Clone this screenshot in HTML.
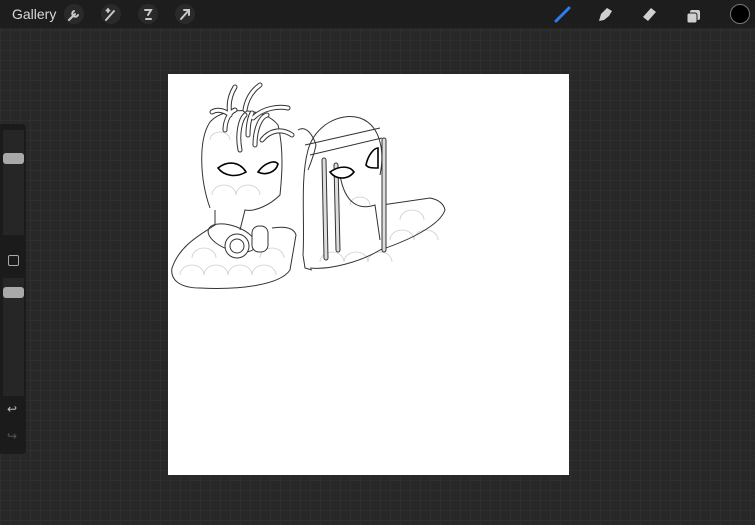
<!DOCTYPE html>
<html><head><style>
html,body{margin:0;padding:0}
body{width:755px;height:525px;overflow:hidden;position:relative;font-family:"Liberation Sans",sans-serif;
background-color:#282828;
background-image:linear-gradient(#2f2f2f 1px,transparent 1px),linear-gradient(90deg,#2f2f2f 1px,transparent 1px);
background-size:10px 10px;}
.top{position:absolute;left:0;top:0;width:755px;height:28px;background:#1d1d1d}
.gal{position:absolute;left:12px;top:6px;color:#d8d8d8;font-size:14px}
.ib{position:absolute;top:4px;width:20px;height:20px;border-radius:10px;background:#2a2a2a}
.side{position:absolute;left:0;top:124px;width:26px;height:330px;background:#1b1b1b;border-radius:0 4px 4px 0}
.trk{position:absolute;left:3px;width:21px;background:#262626}
.kn{position:absolute;left:3px;width:21px;height:11px;background:#a9a9a9;border-radius:3px}
.canvas{position:absolute;left:168px;top:74px;width:401px;height:401px;background:#fff}
</style></head><body>
<div class="top">
<div class="gal">Gallery</div>
<div class="ib" style="left:64px"></div><div class="ib" style="left:101px"></div><div class="ib" style="left:138px"></div><div class="ib" style="left:175px"></div>
<svg width="755" height="28" style="position:absolute;left:0;top:0">
<g stroke="#c8c8c8" stroke-width="2" fill="none" stroke-linecap="round">
<path d="M69 20 L75 14 M74 11 a3 3 0 1 0 4 4"/>
<path d="M106 20 L114 11 M108 9 v3 M106.5 10.5 h3"/>
<path d="M145 10 h6 l-3 5 M146 19 h5"/>
<path d="M181 19 L189 10 M184 10 h5 v5"/>
</g>
<path d="M556 21 L569 8" stroke="#2f7cf0" stroke-width="3" stroke-linecap="round"/>
<path d="M599 21 l2-7 6-6 5 3-3 5-5 4z" fill="#cfcfcf"/>
<path d="M643 17 l8-9 5 4-8 9z" fill="#d0d0d0"/>
<rect x="690" y="10" width="10" height="10" rx="2" fill="#cfcfcf"/><rect x="687" y="13" width="10" height="10" rx="2" fill="#cfcfcf" stroke="#1d1d1d"/>
<circle cx="740" cy="14" r="9.5" fill="#000" stroke="#777" stroke-width="1"/>
</svg>
</div>
<div class="side">
<div class="trk" style="top:6px;height:105px"></div>
<div class="kn" style="top:29px"></div>
<div style="position:absolute;left:8px;top:131px;width:9px;height:9px;border:1.5px solid #aaa;border-radius:2px"></div>
<div class="trk" style="top:154px;height:118px"></div>
<div class="kn" style="top:163px"></div>
<div style="position:absolute;left:7px;top:278px;color:#bbb;font-size:12px">↩</div>
<div style="position:absolute;left:7px;top:305px;color:#555;font-size:12px">↪</div>
</div>
<div class="canvas"></div>
<svg width="755" height="525" style="position:absolute;left:0;top:0">
<g fill="none" stroke="#ccc" stroke-width="0.8">
<path d="M180 275 a12 10 0 0 1 24 0 a12 10 0 0 1 24 0 a12 10 0 0 1 24 0 a12 10 0 0 1 24 0 M192 258 a12 10 0 0 1 24 0 M260 258 a12 10 0 0 1 24 0"/>
<path d="M320 262 a12 10 0 0 1 24 0 a12 10 0 0 1 24 0 a12 10 0 0 1 24 0 M390 240 a12 10 0 0 1 24 0 a12 10 0 0 1 24 0 M400 220 a12 10 0 0 1 24 0"/>
<path d="M210 140 a10 8 0 0 1 20 0 M212 195 a12 10 0 0 1 24 0 a12 10 0 0 1 24 0 M350 205 a10 8 0 0 1 20 0"/>
</g>
<g fill="none" stroke="#333" stroke-width="1">
<path d="M210 208 C200 180 198 140 210 122 C225 105 265 108 278 125 C284 150 282 175 280 195 C270 205 255 212 245 210 L240 230 M215 210 L215 225 C200 235 180 245 172 268 C170 280 180 288 200 288 C240 290 280 285 290 270 L296 235 C294 228 285 226 272 228"/>
<ellipse cx="232" cy="238" rx="25" ry="12" transform="rotate(20 232 238)"/>
<circle cx="237" cy="246" r="12" fill="#fff"/><circle cx="237" cy="246" r="7"/>
<rect x="252" y="226" width="16" height="26" rx="7" fill="#fff"/>
<path d="M303 255 C305 220 300 180 308 150 C315 125 340 112 360 118 C380 125 385 150 380 175 M340 175 C345 205 360 210 375 205 L380 240 M310 268 C330 270 360 262 380 250 C410 240 440 225 445 210 C444 205 440 200 430 198 L382 205 M303 255 L305 268 L312 270"/>
<path d="M305 145 L380 128 M310 155 L382 138 M298 130 c8 -5 15 5 18 15 c-2 10 -6 20 -8 25"/>
</g>
<g fill="none" stroke-linecap="round">
<g stroke="#333" stroke-width="5">
<path d="M230 115 c-2 -10 0 -20 5 -28 M245 110 c2 -12 8 -20 15 -25 M253 118 c10 -10 25 -12 35 -10 M225 130 c0 -10 5 -18 10 -20 M240 150 c-3 -15 0 -30 5 -35 M255 145 c0 -15 5 -28 12 -30 M262 140 c8 -10 20 -12 30 -5 M212 112 c5 -3 12 -2 18 3 M248 135 c0 -10 2 -18 4 -22"/>
<path d="M324 160 L326 258 M336 165 L338 250 M384 140 L384 250"/>
</g>
<g stroke="#fff" stroke-width="3">
<path d="M230 115 c-2 -10 0 -20 5 -28 M245 110 c2 -12 8 -20 15 -25 M253 118 c10 -10 25 -12 35 -10 M225 130 c0 -10 5 -18 10 -20 M240 150 c-3 -15 0 -30 5 -35 M255 145 c0 -15 5 -28 12 -30 M262 140 c8 -10 20 -12 30 -5 M212 112 c5 -3 12 -2 18 3 M248 135 c0 -10 2 -18 4 -22"/>
</g>
<g stroke="#ddd" stroke-width="3">
<path d="M324 160 L326 258 M336 165 L338 250 M384 140 L384 250"/>
</g>
</g>
<g fill="#fff" stroke="#000" stroke-width="1.6">
<path d="M218 168 C228 160 240 162 246 172 C236 178 224 176 218 168Z"/>
<path d="M258 172 C265 162 275 160 278 164 C276 172 266 176 258 172Z"/>
<path d="M330 172 C340 165 350 166 354 172 C348 180 336 180 330 172Z"/>
<path d="M366 165 C368 155 374 148 378 148 L378 168 C372 168 368 168 366 165Z"/>
</g>
</svg>
</body></html>
